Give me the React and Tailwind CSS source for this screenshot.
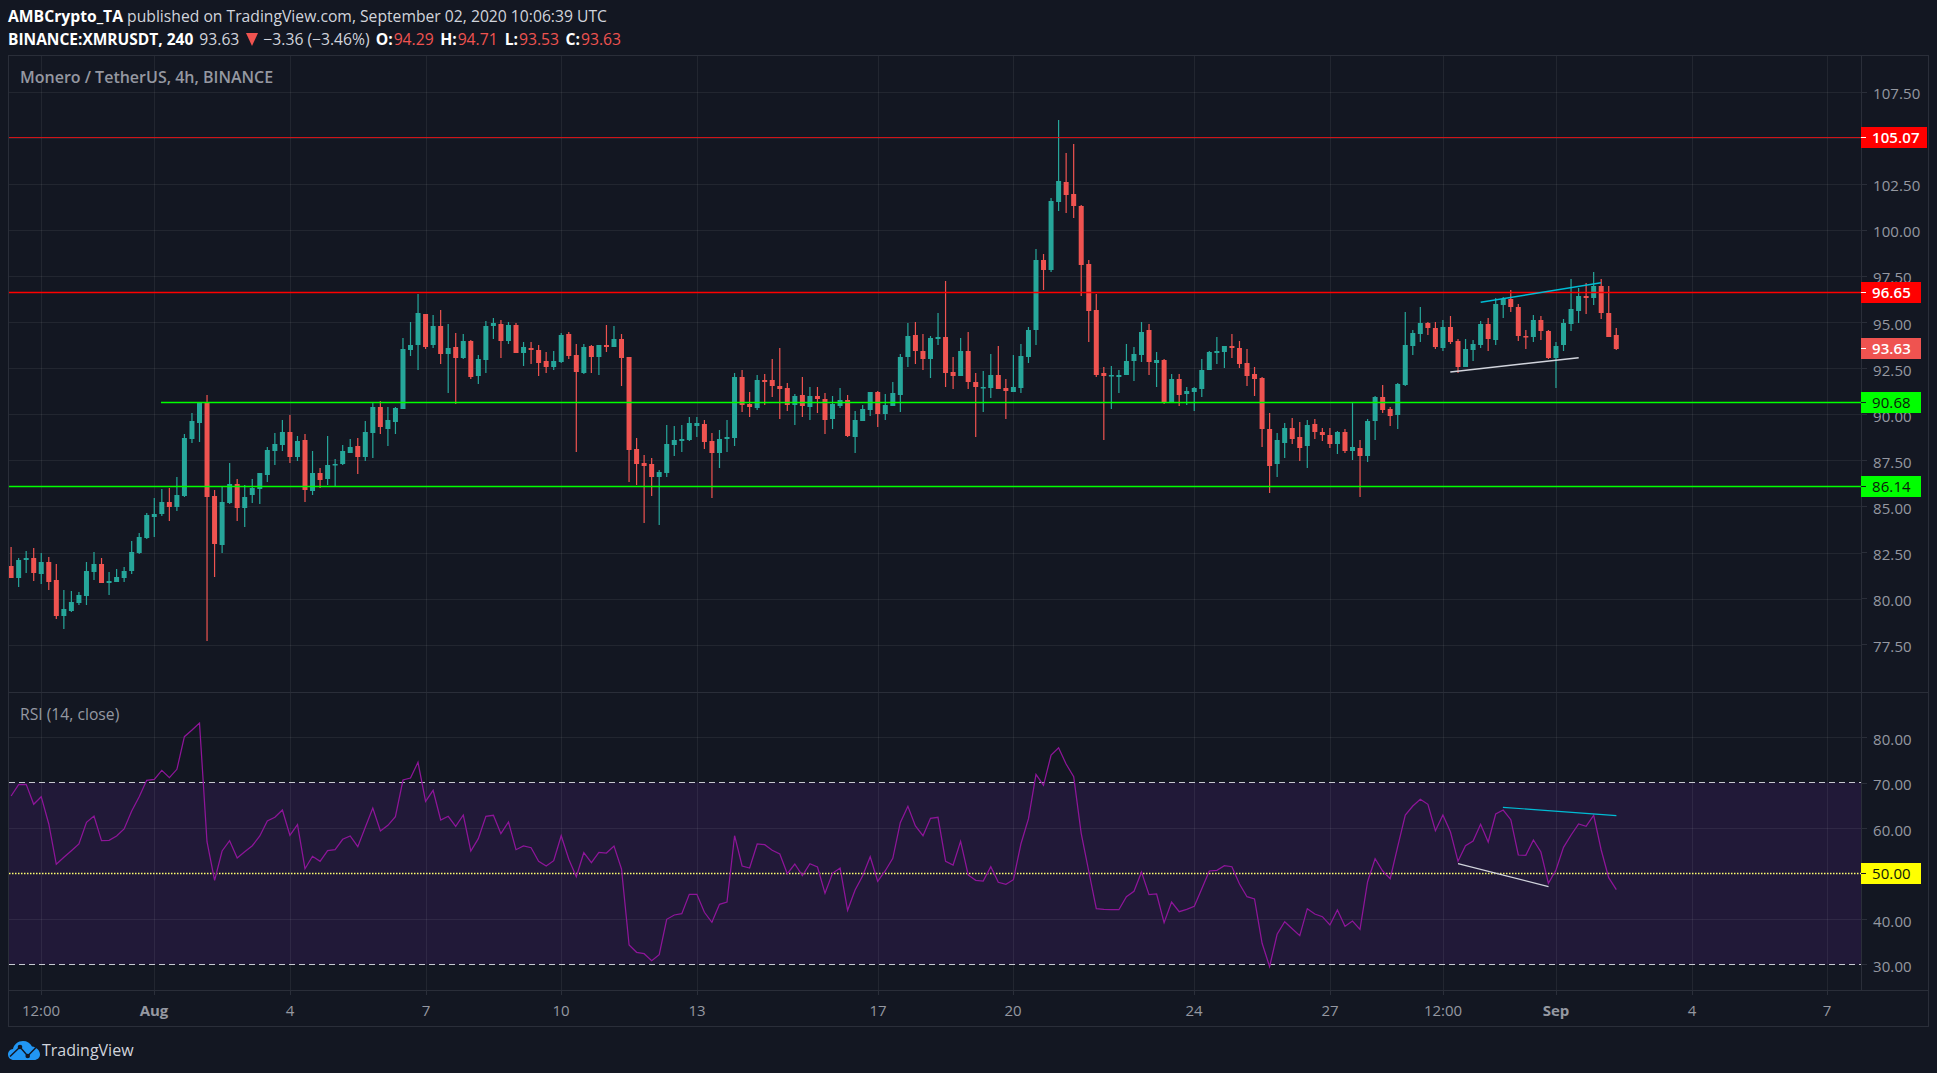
const barX = (i) => 11.1 + 7.536 * i;

// [up, wickTop, bodyTop, bodyBottom, wickBottom], read off the crops; y0 + v / 3 gives the page y
const firstBars = [
  [0,831,888,924,924],[1,864,870,924,951],[1,843,864,870,909],[0,834,864,909,933],[1,849,876,912,942],[0,861,876,936,960],
  [0,882,930,1038,1047],[1,960,1017,1038,1077],[1,963,996,1023,1026],[1,966,975,999,1005],[1,876,903,978,1005],[1,846,882,906,930],
  [0,864,882,939,939],[1,906,933,939,975],[1,897,921,936,936],[1,891,903,924,936],[1,813,846,903,912],[1,789,801,849,852],
  [1,729,735,804,807],[1,684,732,741,801],[1,657,696,732,738],[0,654,696,711,753],[1,621,675,711,723],[1,492,504,678,681],
  [1,429,453,507,519],[1,396,399,459,516],[0,375,399,681,1113],[0,660,678,822,921],[1,651,696,825,849],[1,579,642,699,702],
  [0,627,642,714,753],[1,645,681,714,771],[1,627,654,675,699],[1,609,609,657,702],[1,531,540,615,636],[1,489,522,543,585],
  [1,450,486,525,543],[0,435,486,561,579],[1,498,513,561,573],[0,492,510,660,696],[1,543,609,663,675],[0,594,609,630,654],
  [1,498,585,627,645],[1,567,582,585,651],[1,525,543,582,585],[1,507,531,549,549],[0,504,528,561,612],[1,453,486,561,573],
  [1,399,411,489,564],[0,393,411,471,492],[1,411,450,477,528],[1,411,414,456,492],[1,204,237,417,417],[1,156,225,240,258],
  [1,72,129,225,300],[0,132,132,231,237],[1,135,168,225,234],[0,120,168,252,282],[1,162,234,252,369],[0,189,231,264,402],
  [1,192,213,264,267],[0,210,213,321,327],[1,255,267,318,342],[1,153,168,270,309],[1,144,159,168,207],[0,150,162,213,264],
  [1,156,165,213,222],[0,159,165,249,249],[1,216,231,249,288],[0,216,234,240,282],[0,225,240,279,318],[0,246,273,291,309],
  [1,243,273,291,300],[1,189,195,276,279],[0,186,192,258,267],[0,222,255,306,546],[1,222,231,309,312],[0,225,228,261,309],
  [1,225,225,261,315],[0,165,225,231,246],[1,168,207,231,231],[0,192,207,264,348],[0,261,261,540,636],[0,504,537,582,645],
  [0,555,579,588,759],[0,564,582,621,678],[1,600,606,621,765],
];
const middleBars = [
  [1,945,1002,1089,1101],[1,948,990,1005,1038],[1,945,987,993,1026],[1,921,939,990,993],[1,921,939,948,981],[0,930,942,996,1017],
  [0,969,993,1029,1164],[1,960,987,1029,1074],[1,930,981,987,1026],[1,789,801,984,1008],[0,780,801,885,906],[0,846,882,891,921],
  [1,795,810,894,900],[0,792,810,816,885],[0,747,810,828,861],[0,714,828,837,927],[0,819,834,885,903],[1,852,858,885,945],
  [0,801,855,888,921],[1,831,858,891,930],[0,831,858,867,909],[0,849,867,930,972],[1,858,882,927,957],[1,834,870,888,894],
  [0,855,870,978,981],[1,903,930,981,1029],[1,885,897,933,933],[1,846,846,900,918],[0,843,846,912,951],[1,852,885,912,930],
  [1,816,849,888,888],[1,732,741,855,906],[1,639,678,741,771],[0,636,675,723,762],[0,672,723,747,780],[1,678,684,747,804],
  [1,609,681,687,705],[0,513,681,789,831],[0,741,786,798,837],[1,684,723,798,798],[0,666,723,816,837],[0,789,816,831,981],
  [1,783,831,834,906],[1,732,795,834,864],[0,708,795,837,837],[0,807,834,843,927],[1,735,831,846,846],[1,702,738,834,849],
  [1,651,660,741,759],[1,417,450,660,705],[0,432,450,480,540],[1,264,273,480,486],[1,30,213,276,303],[0,129,216,255,309],
  [0,102,252,288,324],[0,285,288,465,558],[0,450,462,603,696],[0,552,600,795,801],[0,771,789,798,990],[1,768,795,798,897],
  [1,780,795,801,849],[1,702,753,795,795],[1,711,732,753,813],[1,636,666,735,756],[0,642,660,756,795],[1,726,750,759,831],
  [0,747,750,879,882],[1,792,807,879,879],[0,792,807,855,888],[1,831,843,852,885],[1,831,834,846,903],[1,747,780,837,861],
  [1,723,726,780,780],[1,681,723,729,762],[1,708,708,726,774],[0,672,708,714,744],[0,693,714,762,774],[0,717,759,798,828],
  [0,771,792,807,858],[0,801,804,957,1011],[0,909,957,1068,1149],[1,969,990,1062,1101],[1,939,954,999,1044],[0,924,954,987,1002],
];
const lastBars = [
  [0,516,561,594,633],[1,510,525,588,654],[0,507,522,546,567],[0,534,546,555,573],[0,534,555,582,594],[1,543,546,582,612],
  [0,537,546,603,609],[1,457,591,603,630],[0,570,594,618,741],[1,507,513,618,636],[1,438,441,513,570],[0,405,441,480,489],
  [0,471,477,498,528],[1,399,402,495,537],[1,186,285,405,408],[1,240,249,288,315],[1,171,219,252,276],[0,216,219,234,255],
  [0,216,234,291,297],[1,210,231,294,303],[0,198,231,276,282],[0,267,273,351,369],[1,267,297,351,351],[1,270,282,300,333],
  [1,213,222,285,294],[0,204,222,267,303],[1,144,162,270,285],[1,141,147,165,204],[0,120,147,171,186],[0,162,171,258,273],
  [0,240,258,261,297],[1,195,210,261,276],[0,198,210,243,270],[0,240,243,324,327],[1,276,288,324,414],[1,207,219,285,303],
  [1,87,177,222,243],[1,114,138,183,219],[0,99,138,144,192],[1,66,108,144,165],[0,87,108,189,207],[0,108,189,261,261],
  [0,234,255,297,300],
];
const bars = [
  ...firstBars.map((b) => [b, 270]),
  ...middleBars.map((b) => [b, 110]),
  ...lastBars.map((b) => [b, 250]),
];

const rsi = [
  288,254,253,313,290,372,493,472,452,432,367,348,422,421,408,387,333,290,241,238,211,233,208,110,90,69,425,541,453,422,474,455,437,408,363,352,330,406,374,506,469,484,452,449,418,408,440,382,324,393,376,350,240,234,187,304,271,360,349,379,345,453,416,349,346,401,366,449,438,443,484,498,482,407,478,530,458,488,457,459,438,507,735,757,761,782,764,
  658,645,641,583,583,637,667,613,606,407,498,504,432,434,451,462,521,492,527,491,501,580,520,504,631,570,527,470,544,512,475,368,319,378,407,355,352,484,495,424,525,541,543,500,547,553,539,432,356,223,256,165,143,192,230,400,513,626,628,629,629,590,574,516,584,582,668,606,635,628,619,566,513,511,497,500,552,590,597,730,800,703,665,686,707,
  626,642,650,675,630,679,663,688,545,476,513,536,440,345,318,298,313,392,345,396,484,437,423,373,426,342,330,359,465,466,420,456,550,510,442,405,372,379,346,450,533,569,
];
const rsiPoints = rsi.map((v, i) => `${barX(i).toFixed(1)},${(700 + v / 3).toFixed(1)}`).join(" ");

const timeTicks = [
  [4, "12:00"], [19, "Aug", true], [37, "4"], [55, "7"], [73, "10"], [91, "13"], [115, "17"], [133, "20"],
  [157, "24"], [175, "27"], [190, "12:00"], [205, "Sep", true], [223, "4"], [241, "7"],
];
const priceLabels = ["107.50", "", "102.50", "100.00", "97.50", "95.00", "92.50", "90.00", "87.50", "85.00", "82.50", "80.00", "77.50"];
const rsiLabels = ["80.00", "70.00", "60.00", "", "40.00", "30.00"];

function GridColumns({ top, bottom }) {
  return (
    <g stroke="#ffffff" strokeOpacity="0.065" shapeRendering="crispEdges">
      {timeTicks.map(([i]) => (
        <line key={i} x1={Math.round(barX(i)) + 0.5} x2={Math.round(barX(i)) + 0.5} y1={top} y2={bottom} />
      ))}
    </g>
  );
}

function PricePane() {
  const rows = priceLabels.map((_, i) => Math.round(92 + i * 46.05) + 0.5);
  return (
    <svg className="block w-full h-full" viewBox="9 56 1852 636">
      <GridColumns top={56} bottom={692} />
      <g stroke="#ffffff" strokeOpacity="0.065" shapeRendering="crispEdges">
        {rows.map((y) => (
          <line key={y} x1="9" x2="1861" y1={y} y2={y} />
        ))}
      </g>
      {bars.map(([[up, wickTop, bodyTop, bodyBottom, wickBottom], y0], i) => (
        <g key={i} fill={up ? "#26a69a" : "#ef5350"}>
          <rect x={barX(i) - 0.6} y={y0 + wickTop / 3} width="1.2" height={(wickBottom - wickTop) / 3} />
          <rect x={barX(i) - 2.5} y={y0 + bodyTop / 3} width="5" height={Math.max((bodyBottom - bodyTop) / 3, 1.5)} />
        </g>
      ))}
      <line x1="9" x2="1861" y1="137.5" y2="137.5" stroke="#d01418" strokeWidth="1.1" />
      <line x1="9" x2="1861" y1="292.5" y2="292.5" stroke="#ff0000" strokeWidth="1.3" />
      <line x1="161" x2="1861" y1="402.5" y2="402.5" stroke="#00ff00" strokeWidth="1.3" />
      <line x1="9" x2="1861" y1="486.5" y2="486.5" stroke="#00ff00" strokeWidth="1.3" />
      <line x1="1480.7" y1="302.3" x2="1601" y2="282.7" stroke="#00bcd4" strokeWidth="1.5" />
      <line x1="1450.3" y1="372" x2="1578.7" y2="357.7" stroke="#d1d4dc" strokeWidth="1.5" />
    </svg>
  );
}

function RsiPane() {
  const rows = [737.5, 828.5, 919.5];
  return (
    <svg className="block w-full h-full" viewBox="9 693 1852 297">
      <rect x="9" y="782.5" width="1852" height="182" fill="#211938" />
      <GridColumns top={693} bottom={990} />
      <g stroke="#ffffff" strokeOpacity="0.065" shapeRendering="crispEdges">
        {rows.map((y) => (
          <line key={y} x1="9" x2="1861" y1={y} y2={y} />
        ))}
      </g>
      <line x1="9" x2="1861" y1="782.5" y2="782.5" stroke="#c6c8d0" strokeDasharray="6 4" />
      <line x1="9" x2="1861" y1="964.5" y2="964.5" stroke="#c6c8d0" strokeDasharray="6 4" />
      <line x1="9" x2="1861" y1="873.5" y2="873.5" stroke="#ffff70" strokeWidth="1.3" strokeDasharray="1.5 1.5" />
      <polyline points={rsiPoints} fill="none" stroke="#8e1599" strokeWidth="1.25" />
      <line x1="1502.9" y1="807.3" x2="1616.4" y2="815.7" stroke="#00bcd4" strokeWidth="1.2" />
      <line x1="1458" y1="863.7" x2="1548.5" y2="886.7" stroke="#d1d4dc" strokeWidth="1.2" />
    </svg>
  );
}

function AxisRow({ label, className }) {
  return (
    <div className={`flex items-center ${className}`}>
      {label && <div className="w-[5px] h-px bg-[#2a2e39]" />}
      <span className="ml-[6px] mt-[3px] text-[15px] text-[#9598a1] tracking-[0.1px]">{label}</span>
    </div>
  );
}

function Badge({ top, value, bg, dark, wide }) {
  return (
    <div
      className={`absolute left-[-1px] h-[21px] flex items-center ${wide ? "w-[66px]" : "w-[60px]"} ${bg} ${
        dark ? "text-[#0b1a0b]" : "text-white font-semibold"
      }`}
      style={{ top }}
    >
      <div className={`w-[5px] h-px ${dark ? "bg-[#131722]" : "bg-white"}`} />
      <span className="ml-[6px] text-[15px] tracking-[0.1px]">{value}</span>
    </div>
  );
}

function TradingViewLogo() {
  return (
    <svg width="32" height="19" viewBox="0 0 32 19">
      <path
        d="M6 19C2.5 19 0 16.5 0 13.5C0 10.5 2.2 8.4 5 8C6 3.5 10 0 15 0C19 0 22.4 2 24 5.5C28.5 6 32 9.5 32 13.5C32 16.5 29.5 19 26 19Z"
        fill="#2196f3"
      />
      <path d="M2 15.5L12 6L19.7 15L28 6.5" fill="none" stroke="#131722" strokeWidth="1.5" />
      <circle cx="12" cy="6" r="2.3" fill="#131722" />
      <circle cx="19.7" cy="15" r="2.3" fill="#131722" />
    </svg>
  );
}

export default function App() {
  return (
    <div className="w-[1937px] h-[1073px] overflow-hidden bg-[#131722] text-[#d1d4dc] font-['Open_Sans','Liberation_Sans',sans-serif]">
      <div className="h-[55px] pl-2 pt-[5px] text-[15.7px] leading-[23px]">
        <div>
          <span className="font-bold text-white">AMBCrypto_TA</span> published on TradingView.com, September 02, 2020 10:06:39 UTC
        </div>
        <div className="flex items-center">
          <span className="font-bold text-white text-[15.5px]">BINANCE:XMRUSDT, 240</span>
          <span className="ml-[6px]">93.63</span>
          <svg className="ml-[7px]" width="12" height="13" viewBox="0 0 12 13">
            <path d="M0 0H12L6 13Z" fill="#ef5350" />
          </svg>
          <span className="ml-[5px]">−3.36 (−3.46%)</span>
          <span className="ml-[6px] font-bold text-white">O:</span>
          <span className="ml-[1px] text-[#ef5350]">94.29</span>
          <span className="ml-[6.5px] font-bold text-white">H:</span>
          <span className="ml-[1px] text-[#ef5350]">94.71</span>
          <span className="ml-[7px] font-bold text-white">L:</span>
          <span className="ml-[1px] text-[#ef5350]">93.53</span>
          <span className="ml-[6.5px] font-bold text-white">C:</span>
          <span className="ml-[1px] text-[#ef5350]">93.63</span>
        </div>
      </div>

      <div className="ml-2 w-[1921px] h-[972px] border border-[#2a2e39]">
        <div className="flex h-[934px]">
          <div className="w-[1852px] flex flex-col">
            <div className="relative h-[636px]">
              <PricePane />
              <div className="absolute left-[11px] top-[10px] text-[16px] leading-[22px] font-semibold text-[#9598a1]">
                Monero / TetherUS, 4h, BINANCE
              </div>
            </div>
            <div className="relative h-[298px] border-t border-[#2a2e39]">
              <RsiPane />
              <div className="absolute left-[11px] top-[10px] text-[15.7px] leading-[22px] text-[#9598a1]">RSI (14, close)</div>
            </div>
          </div>

          <div className="relative w-[67px] border-l border-[#2a2e39]">
            <div className="h-[636px] pt-[13px]">
              {priceLabels.map((label, i) => (
                <AxisRow key={i} label={label} className="h-[46.05px]" />
              ))}
            </div>
            <div className="h-[298px] border-t border-[#2a2e39] pt-[22px]">
              {rsiLabels.map((label, i) => (
                <AxisRow key={i} label={label} className="h-[45.45px]" />
              ))}
            </div>
            <Badge top={71} value="105.07" bg="bg-[#ff0000]" wide />
            <Badge top={226} value="96.65" bg="bg-[#ff0000]" />
            <Badge top={282} value="93.63" bg="bg-[#ef5350]" />
            <Badge top={336} value="90.68" bg="bg-[#00ff00]" dark />
            <Badge top={420} value="86.14" bg="bg-[#00ff00]" dark />
            <Badge top={807} value="50.00" bg="bg-[#ffff00]" dark />
          </div>
        </div>

        <div className="flex h-[36px] border-t border-[#2a2e39]">
          {timeTicks.map(([i, label, bold], n) => (
            <div
              key={n}
              className="w-0 flex flex-col items-center shrink-0"
              style={{ marginLeft: Math.round(barX(i)) - (n ? Math.round(barX(timeTicks[n - 1][0])) : 9) }}
            >
              <div className="w-px h-[4px] shrink-0 bg-[#2a2e39]" />
              <span className={`mt-[4px] text-[15px] leading-[22px] text-[#9598a1] whitespace-nowrap ${bold ? "font-bold" : ""}`}>
                {label}
              </span>
            </div>
          ))}
        </div>
      </div>

      <div className="flex items-center pl-2 pt-[14px]">
        <TradingViewLogo />
        <span className="ml-[2px] text-[16px] leading-[19px] text-[#d1d4dc]">TradingView</span>
      </div>
    </div>
  );
}
